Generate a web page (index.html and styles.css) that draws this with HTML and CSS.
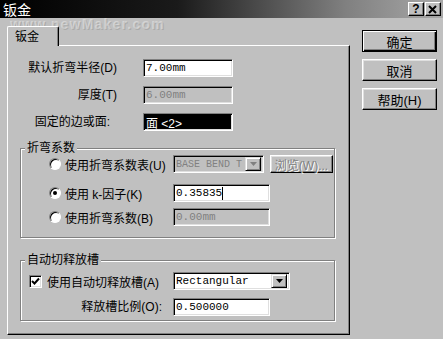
FILE: index.html
```html
<!DOCTYPE html>
<html lang="zh">
<head>
    <meta charset="UTF-8">
    <title>钣金</title>
    <link rel="stylesheet" href="styles.css">
</head>
<body>
    <!-- Title bar -->
    <div class="titlebar">
        <span class="title">钣金</span>
        <div class="caption-btns">
            <span class="cbtn">?</span>
            <span class="cbtn">
                <svg width="10" height="9" viewBox="0 0 10 9"><path d="M1 1 L8 8 M8 1 L1 8" stroke="#000" stroke-width="2"/></svg>
            </span>
        </div>
    </div>
    <div class="watermark">www.newMaker.com</div>

    <div class="main">
        <div class="tabs">
            <div class="tab">钣金</div>
            <div class="panel">
                <div class="form-top">
                    <span class="lbl">默认折弯半径(D)</span>
                    <span class="edit">7.00mm</span>
                    <span class="lbl">厚度(T)</span>
                    <span class="edit disabled">6.00mm</span>
                    <span class="lbl colon">固定的边或面:</span>
                    <span class="edit selected">面 &lt;2&gt;</span>
                </div>

                <!-- Bend factor -->
                <div class="group bend">
                    <div class="group-title">折弯系数</div>
                    <div class="rows">
                        <div class="row r1">
                            <span class="opt"><span class="radio"></span>使用折弯系数表(U)</span>
                            <div class="pair">
                                <span class="combo disabled"><span class="combo-text">BASE BEND T</span><span class="drop"><svg width="7" height="4" viewBox="0 0 7 4"><path d="M0 0 H7 L3.5 4 Z" fill="#808080"/></svg></span></span>
                                <span class="btn browse disabled">浏览(W)...</span>
                            </div>
                        </div>
                        <div class="row r2">
                            <span class="opt"><span class="radio checked"></span>使用 k-因子(K)</span>
                            <span class="edit wide">0.35835<span class="caret"></span></span>
                        </div>
                        <div class="row r3">
                            <span class="opt"><span class="radio"></span>使用折弯系数(B)</span>
                            <span class="edit wide disabled">0.00mm</span>
                        </div>
                    </div>
                </div>

                <!-- Auto relief -->
                <div class="group relief">
                    <div class="group-title">自动切释放槽</div>
                    <div class="rows">
                        <div class="row r1">
                            <span class="opt"><span class="check"><svg width="9" height="9" viewBox="0 0 9 9"><path d="M1 4 L3.5 6.5 L8 1.5" stroke="#000" stroke-width="2" fill="none"/></svg></span>使用自动切释放槽(A)</span>
                            <span class="combo relief-combo"><span class="combo-text">Rectangular</span><span class="drop"><svg width="7" height="4" viewBox="0 0 7 4"><path d="M0 0 H7 L3.5 4 Z" fill="#000"/></svg></span></span>
                        </div>
                        <div class="row r2">
                            <span class="lbl ratio">释放槽比例(O):</span>
                            <span class="edit wide">0.500000</span>
                        </div>
                    </div>
                </div>
            </div>
        </div>

        <div class="buttons">
            <span class="btn default">确定</span>
            <span class="btn">取消</span>
            <span class="btn">帮助(H)</span>
        </div>
    </div>
</body>
</html>
```

FILE: styles.css
```css
* {
    box-sizing: border-box;
}

body {
    margin: 0;
    width: 443px;
    height: 339px;
    overflow: hidden;
    position: relative;
    background: #c0c0c0;
    font-family: "Liberation Sans", "Noto Sans CJK SC", sans-serif;
    font-size: 12px;
    color: #000;
}

.titlebar {
    height: 18px;
    display: flex;
    align-items: center;
    justify-content: space-between;
    padding: 0 2px 0 3px;
    background: linear-gradient(90deg, #000 0%, #1a1a1a 40%, #808080 78%, #a8a8a8 100%);
}

.title {
    color: #fff;
    font-family: "Noto Sans CJK SC", sans-serif;
    font-size: 14px;
    line-height: 16px;
}

.caption-btns {
    display: flex;
    gap: 1px;
}

.cbtn {
    width: 16px;
    height: 14px;
    display: flex;
    align-items: center;
    justify-content: center;
    font-weight: bold;
    font-size: 12px;
    background: #c0c0c0;
    border: 1px solid;
    border-color: #fff #000 #000 #fff;
    box-shadow: inset -1px -1px 0 #808080;
}

.watermark {
    position: absolute;
    top: 19px;
    left: 10px;
    font-size: 14px;
    line-height: 10px;
    font-weight: bold;
    letter-spacing: 1.2px;
    color: rgba(255, 255, 255, 0.35);
    text-shadow: 1px 1px 0 rgba(120, 120, 120, 0.3);
}

.main {
    display: flex;
    align-items: flex-start;
    padding: 8px 0 0 7px;
}

.tabs {
    width: 343px;
}

.tab {
    position: relative;
    z-index: 1;
    width: 52px;
    height: 20px;
    margin-bottom: -1px;
    padding: 3px 0 0 7px;
    line-height: 15px;
    background: #c0c0c0;
    border-top: 1px solid #fff;
    border-left: 1px solid #fff;
    border-right: 1px solid #000;
    border-radius: 2px 2px 0 0;
    box-shadow: inset -1px 0 0 #808080;
    font-size: 12px;
}

.panel {
    height: 290px;
    padding: 13px 13px 0 12px;
    border: 1px solid;
    border-color: #fff #000 #000 #fff;
    box-shadow: inset -1px -1px 0 #808080;
}

.form-top {
    display: grid;
    grid-template-columns: 97px 90px;
    grid-auto-rows: 18px;
    column-gap: 26px;
    row-gap: 9px;
}

.lbl {
    text-align: right;
    line-height: 18px;
    white-space: nowrap;
}

.lbl.colon {
    padding-right: 7px;
}

.edit {
    display: flex;
    align-items: center;
    height: 18px;
    padding-left: 2px;
    background: #fff;
    border: 1px solid;
    border-color: #808080 #fff #fff #808080;
    box-shadow: inset 1px 1px 0 #000, inset -1px -1px 0 #dfdfdf;
    font-family: "Liberation Mono", "Noto Sans CJK SC", monospace;
    font-size: 11px;
    white-space: nowrap;
}

.edit.disabled {
    background: #c0c0c0;
    color: #808080;
}

.edit.selected {
    background: #000;
    color: #fff;
    font-family: "Liberation Sans", "Noto Sans CJK SC", sans-serif;
    font-size: 12px;
}

.edit.wide {
    width: 97px;
}

.caret {
    width: 1px;
    height: 13px;
    background: #000;
}

.group {
    width: 315px;
    padding-left: 4px;
    border: 1px solid #808080;
    box-shadow: inset 1px 1px 0 #fff, 1px 1px 0 #fff;
}

.group-title {
    width: fit-content;
    margin-top: -8px;
    padding: 0 2px;
    line-height: 14px;
    background: #c0c0c0;
}

.bend {
    margin-top: 17px;
    padding-bottom: 11px;
}

.relief {
    margin-top: 22px;
    padding-bottom: 4px;
}

.rows {
    display: flex;
    flex-direction: column;
}

.bend .rows {
    margin-left: 24px;
}

.relief .rows {
    margin-left: 4px;
}

.row {
    display: grid;
    align-items: center;
    height: 18px;
}

.bend .row {
    grid-template-columns: 124px auto;
}

.bend .r2 {
    margin-top: 11px;
}

.bend .r3 {
    margin-top: 6px;
}

.relief .row {
    grid-template-columns: 144px auto;
}

.relief .r1 {
    margin-top: 5px;
}

.relief .r2 {
    margin-top: 8px;
}

.lbl.ratio {
    padding-right: 11px;
}

.opt {
    display: flex;
    align-items: center;
    white-space: nowrap;
}

.radio {
    width: 12px;
    height: 12px;
    margin-right: 4px;
    border-radius: 50%;
    background: #fff;
    border: 1px solid;
    border-color: #808080 #fff #fff #808080;
    box-shadow: inset 1px 1px 0 #000;
    display: flex;
    align-items: center;
    justify-content: center;
}

.radio.checked::after {
    content: "";
    width: 4px;
    height: 4px;
    border-radius: 50%;
    background: #000;
}

.check {
    width: 13px;
    height: 13px;
    margin-right: 5px;
    background: #fff;
    border: 1px solid;
    border-color: #808080 #fff #fff #808080;
    box-shadow: inset 1px 1px 0 #000, inset -1px -1px 0 #dfdfdf;
    display: flex;
    align-items: center;
    justify-content: center;
}

.pair {
    display: flex;
    gap: 6px;
}

.combo {
    display: flex;
    align-items: center;
    justify-content: space-between;
    height: 18px;
    padding: 0 2px 0 2px;
    background: #fff;
    border: 1px solid;
    border-color: #808080 #fff #fff #808080;
    box-shadow: inset 1px 1px 0 #000, inset -1px -1px 0 #dfdfdf;
    font-family: "Liberation Mono", monospace;
    font-size: 11px;
}

.combo.disabled {
    width: 91px;
    background: #c0c0c0;
    color: #808080;
    font-size: 10px;
}

.relief-combo {
    width: 117px;
}

.combo-text {
    white-space: nowrap;
}

.drop {
    flex: none;
    width: 16px;
    height: 14px;
    display: flex;
    align-items: center;
    justify-content: center;
    background: #c0c0c0;
    border: 1px solid;
    border-color: #dfdfdf #000 #000 #dfdfdf;
    box-shadow: inset 1px 1px 0 #fff, inset -1px -1px 0 #808080;
}

.btn {
    display: flex;
    align-items: center;
    justify-content: center;
    width: 75px;
    height: 22px;
    background: #c0c0c0;
    border: 1px solid;
    border-color: #fff #000 #000 #fff;
    box-shadow: inset -1px -1px 0 #808080, inset 1px 1px 0 #dfdfdf;
    font-size: 13px;
    white-space: nowrap;
}

.btn.default {
    border-color: #000;
    box-shadow: inset 1px 1px 0 #fff, inset -1px -1px 0 #000, inset -2px -2px 0 #808080;
}

.btn.browse {
    width: 63px;
    height: 18px;
    font-size: 12px;
}

.btn.disabled {
    color: #808080;
    text-shadow: 1px 1px 0 #fff;
}

.buttons {
    display: flex;
    flex-direction: column;
    gap: 7px;
    margin: 4px 0 0 12px;
}
```
